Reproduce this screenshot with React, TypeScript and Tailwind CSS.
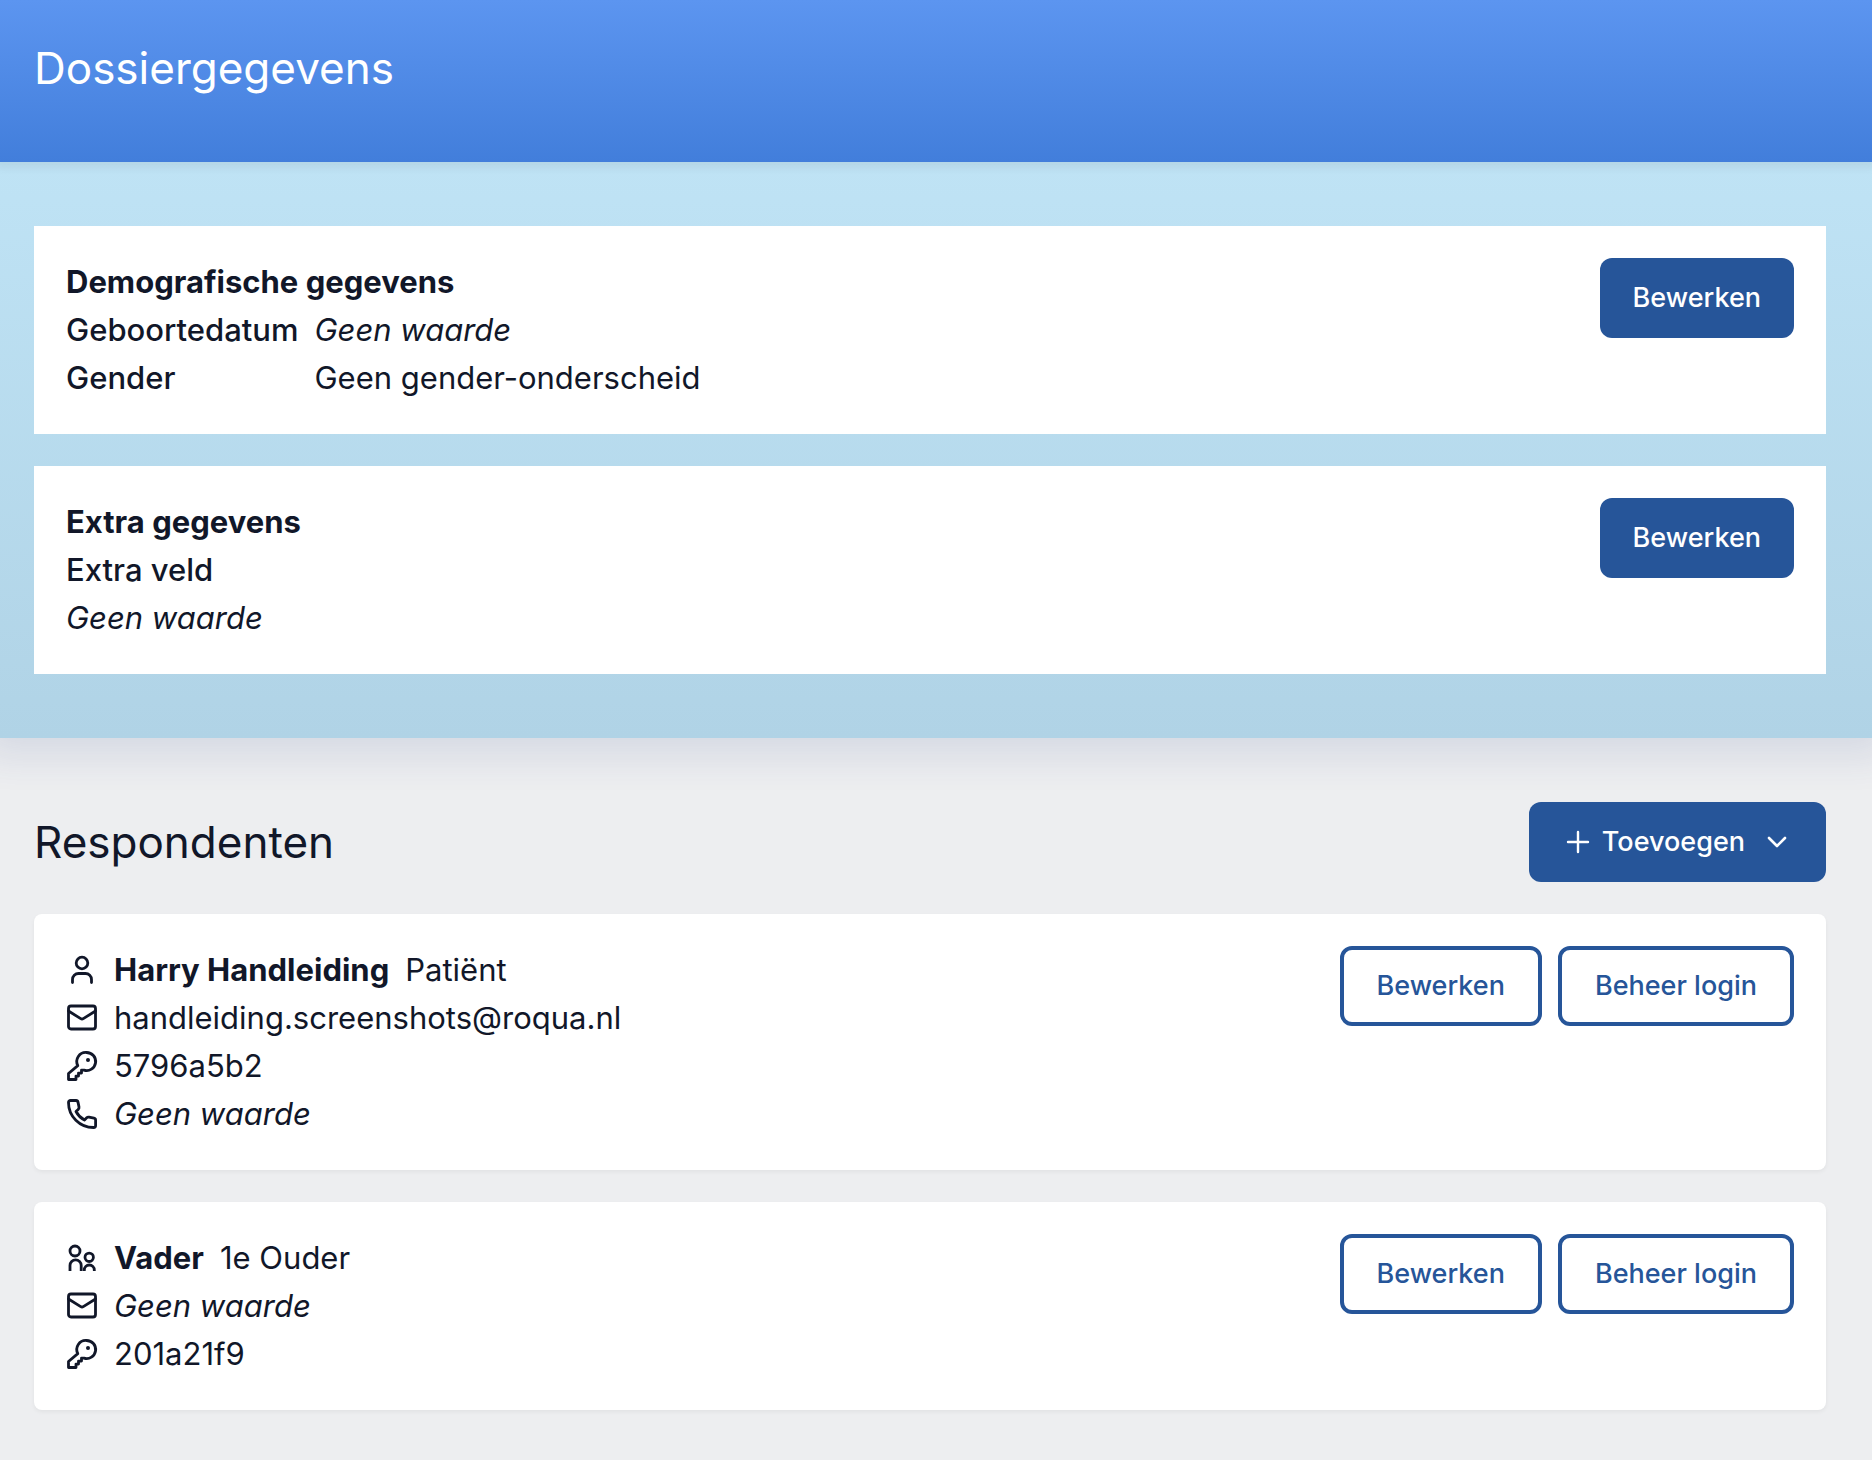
import React from "react";

const iconProps = {
  viewBox: "0 0 32 32",
  fill: "none",
  stroke: "currentColor",
  strokeWidth: 2.8,
  strokeLinejoin: "round" as const,
  strokeLinecap: "round" as const,
  "aria-hidden": true,
  className: "size-8 shrink-0",
};

const UserIcon = () => (
  <svg {...iconProps}>
    <circle cx="16" cy="9" r="5.8" />
    <path d="M6.5 28.5V25.5a6 6 0 0 1 6-6h7a6 6 0 0 1 6 6V28.5" />
  </svg>
);

const ParentIcon = () => (
  <svg {...iconProps} strokeLinecap="butt">
    <circle cx="9" cy="9" r="5" />
    <circle cx="23.2" cy="15.3" r="4.2" />
    <path d="M4 29v-5.500a5.600 5.600 0 0 1 11.200 0V29" />
    <path d="M18.300 29v-1a5 5 0 0 1 10 0v1" />
  </svg>
);

const MailIcon = () => (
  <svg {...iconProps}>
    <rect x="2.500" y="4" width="27" height="23" rx="2.500" />
    <path d="M2.500 9 14.700 16.600a2.600 2.600 0 0 0 2.600 0L29.500 9" />
  </svg>
);

const KeyIcon = () => (
  <svg {...iconProps}>
    <path d="M20.500 2.500a9 9 0 1 1-2.500 17.600h-2.500v3h-3v3h-2.500v3.400h-7.500v-6L11.800 15.600A9 9 0 0 1 20.500 2.500Z" />
    <circle cx="22" cy="10" r="2" fill="currentColor" stroke="none" />
  </svg>
);

const PhoneIcon = () => (
  <svg {...iconProps}>
    <path d="M4.500 2.500H10a2 2 0 0 1 2 1.600l1 5a2.500 2.500 0 0 1-.8 2.300L10 13.500a20 20 0 0 0 8.500 8.500l2.200-2.200a2.500 2.500 0 0 1 2.300-.7l5 1a2 2 0 0 1 1.600 2V27.500a2 2 0 0 1-2 2A25 25 0 0 1 2.500 4.500a2 2 0 0 1 2-2Z" />
  </svg>
);

const solidButton =
  "flex shrink-0 items-center rounded-xl bg-[#265599] px-[33px] py-5 text-[27px] leading-10 font-medium text-white";
const outlineButton =
  "shrink-0 rounded-xl border-4 border-[#265599] bg-white px-[33px] py-4 text-[27px] leading-10 font-medium text-[#265599]";

function Line({ icon, children }: { icon: React.ReactNode; children: React.ReactNode }) {
  return (
    <li className="flex items-center gap-4">
      {icon}
      <span className="flex gap-4">{children}</span>
    </li>
  );
}

function Respondent({ children }: { children: React.ReactNode }) {
  return (
    <article className="flex items-start justify-between rounded-lg bg-white p-8 shadow-[0_2px_4px_rgba(0,0,0,0.05)]">
      <ul>{children}</ul>
      <div className="flex gap-4">
        <button type="button" className={outlineButton}>Bewerken</button>
        <button type="button" className={outlineButton}>Beheer login</button>
      </div>
    </article>
  );
}

export default function App() {
  return (
    <div className="min-h-screen bg-[#edeef0] font-[Inter,sans-serif] text-[31px] leading-[48px] text-[#111729]">
      <header className="relative bg-linear-to-b from-[#5c95f0] to-[#427edb] pt-8 pr-[46px] pb-[58px] pl-[34px] shadow-[0_2px_8px_4px_rgba(0,0,0,0.06)]">
        <h1 className="text-[44px] leading-[72px] text-white">Dossiergegevens</h1>
      </header>

      <section className="flex flex-col gap-8 bg-linear-to-b from-[#bfe3f5] to-[#b0d3e6] py-16 pr-[46px] pl-[34px] shadow-[0_0_36px_18px_rgba(50,70,140,0.12)]">
        <article className="flex items-start justify-between bg-white p-8">
          <div>
            <h2 className="font-bold">Demografische gegevens</h2>
            <dl className="grid grid-cols-[auto_auto] gap-x-4">
              <dt className="font-medium">Geboortedatum</dt>
              <dd className="italic">Geen waarde</dd>
              <dt className="font-medium">Gender</dt>
              <dd>Geen gender-onderscheid</dd>
            </dl>
          </div>
          <button type="button" className={solidButton}>Bewerken</button>
        </article>
        <article className="flex items-start justify-between bg-white p-8">
          <div>
            <h2 className="font-bold">Extra gegevens</h2>
            <dl>
              <dt className="font-medium">Extra veld</dt>
              <dd className="italic">Geen waarde</dd>
            </dl>
          </div>
          <button type="button" className={solidButton}>Bewerken</button>
        </article>
      </section>

      <main className="flex flex-col gap-8 pt-16 pr-[46px] pb-12 pl-[34px]">
        <div className="flex items-center justify-between">
          <h2 className="text-[44px] leading-[72px]">Respondenten</h2>
          <button type="button" className={solidButton} aria-haspopup="menu">
            <svg viewBox="0 0 32 32" fill="none" stroke="currentColor" strokeWidth="2.400" strokeLinecap="round" className="size-8" aria-hidden="true">
              <path d="M16 6v20M6 16h20" />
            </svg>
            <span className="ml-2">Toevoegen</span>
            <svg viewBox="0 0 32 32" fill="none" stroke="currentColor" strokeWidth="2.600" strokeLinecap="round" strokeLinejoin="round" className="ml-4 size-8" aria-hidden="true">
              <path d="m8 12 8 8 8-8" />
            </svg>
          </button>
        </div>

        <Respondent>
          <Line icon={<UserIcon />}>
            <strong className="font-bold">Harry Handleiding</strong>
            <span>Patiënt</span>
          </Line>
          <Line icon={<MailIcon />}>handleiding.screenshots@roqua.nl</Line>
          <Line icon={<KeyIcon />}>5796a5b2</Line>
          <Line icon={<PhoneIcon />}><em>Geen waarde</em></Line>
        </Respondent>

        <Respondent>
          <Line icon={<ParentIcon />}>
            <strong className="font-bold">Vader</strong>
            <span>1e Ouder</span>
          </Line>
          <Line icon={<MailIcon />}><em>Geen waarde</em></Line>
          <Line icon={<KeyIcon />}>201a21f9</Line>
        </Respondent>
      </main>
    </div>
  );
}
